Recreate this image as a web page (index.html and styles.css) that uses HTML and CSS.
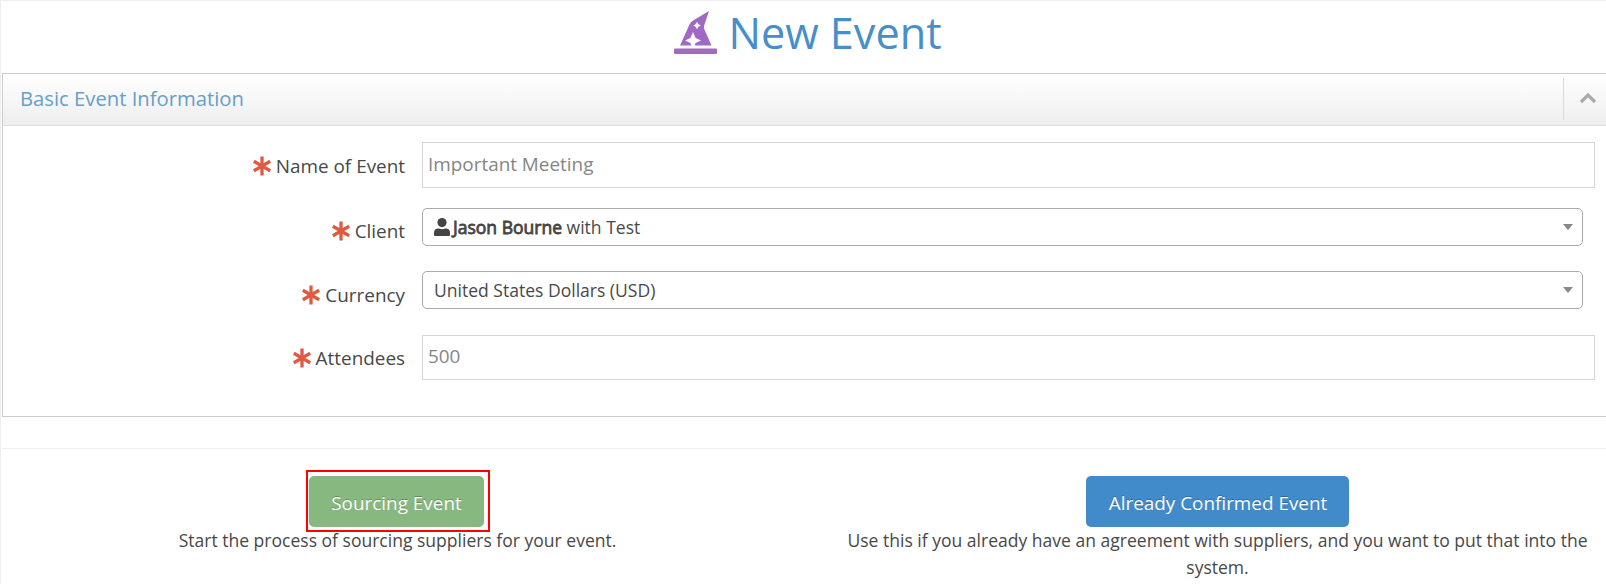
FILE: index.html
```html
<!DOCTYPE html>
<html lang="en">
<head>
    <meta charset="UTF-8">
    <meta name="viewport" content="width=device-width, initial-scale=1.0">
    <title>New Event</title>
    <link rel="stylesheet" href="styles.css">
</head>
<body>
    <!-- shared icons -->
    <svg class="sprite">
        <symbol id="asterisk" viewBox="0 0 18 20">
            <path d="M9 .5v19M.8 5.3l16.4 9.4M.8 14.7l16.4-9.4" fill="none" stroke="currentColor" stroke-width="3.3"/>
        </symbol>
    </svg>

    <div class="page">
        <h1 class="page-title">
            <svg class="hat" viewBox="0 0 43 43">
                <path d="M6 34.5L15.5 13.5Q16.8 10.8 19.5 9.2L35 0L30.2 14.6Q29.6 16.3 30.2 18L37.5 34.5Z"/>
                <path class="star" d="M23 10.8L24.4 13.3L26.9 14.5L24.4 15.7L23 18.2L21.6 15.7L19.1 14.5L21.6 13.3Z"/>
                <path class="star" d="M19 21L21.6 27L27 29.5L21.6 32L20.6 35H17.4L16.4 32L11 29.5L16.4 27Z"/>
                <rect x="0" y="37.5" width="43" height="5.5" rx="1"/>
            </svg>
            <span>New Event</span>
        </h1>

        <div class="panel">
            <div class="panel-header">
                <h2>Basic Event Information</h2>
                <a class="collapse">
                    <svg width="18" height="12" viewBox="0 0 18 12"><path d="M2 10l7-7 7 7" fill="none" stroke="#aaa" stroke-width="3.2"/></svg>
                </a>
            </div>
            <form class="panel-body">
                <div class="form-row">
                    <label for="name"><svg class="required"><use href="#asterisk"/></svg>Name of Event</label>
                    <input type="text" id="name" class="field" value="Important Meeting">
                </div>
                <div class="form-row">
                    <label><svg class="required"><use href="#asterisk"/></svg>Client</label>
                    <div class="select">
                        <svg class="user" viewBox="0 0 16 18"><circle cx="8" cy="4.6" r="4.6"/><path d="M0 18v-3.2Q0 10.5 4.5 10.5H5Q8 12 11 10.5h.5Q16 10.5 16 14.8V17q0 1-1 1H1q-1 0-1-1z"/></svg>
                        <span><b>Jason Bourne</b> with Test</span>
                        <i class="arrow"></i>
                    </div>
                </div>
                <div class="form-row">
                    <label><svg class="required"><use href="#asterisk"/></svg>Currency</label>
                    <div class="select">
                        <span>United States Dollars (USD)</span>
                        <i class="arrow"></i>
                    </div>
                </div>
                <div class="form-row">
                    <label for="attendees"><svg class="required"><use href="#asterisk"/></svg>Attendees</label>
                    <input type="text" id="attendees" class="field short" value="500">
                </div>
            </form>
        </div>

        <hr>

        <div class="actions">
            <div class="action">
                <div class="highlight"><button class="btn btn-success">Sourcing Event</button></div>
                <p>Start the process of sourcing suppliers for your event.</p>
            </div>
            <div class="action">
                <button class="btn btn-primary">Already Confirmed Event</button>
                <p>Use this if you already have an agreement with suppliers, and you want to put that into the system.</p>
            </div>
        </div>
    </div>
</body>
</html>
```

FILE: styles.css
```css
* {
    box-sizing: border-box;
}
body {
    margin: 0;
    font-family: "Open Sans", sans-serif;
    font-size: 17.55px;
    line-height: 27px;
    color: #484848;
    background-color: #fff;
    overflow: hidden;
}
.sprite {
    display: none;
}
.page {
    height: 584px;
    border-top: 1px solid #eee;
    border-left: 1px solid #eee;
    padding-left: 1px;
}
.page-title {
    display: flex;
    justify-content: center;
    height: 72px;
    margin: 0;
    padding-left: 7px;
    font-size: 43.2px;
    font-weight: 400;
    line-height: 63px;
    color: #478fca;
}
.hat {
    width: 43px;
    height: 43px;
    margin: 10px 11px 0 1px;
    fill: #a069c3;
}
.star {
    fill: #fff;
}
.panel {
    height: 344px;
    border: 1px solid #ccc;
    border-right: none;
}
.panel-header {
    display: flex;
    justify-content: space-between;
    align-items: center;
    height: 52px;
    padding-left: 17px;
    border-bottom: 1px solid #ddd;
    background: linear-gradient(to bottom, #fff 0%, #eee 100%);
}
.panel-header h2 {
    margin: 0;
    padding-bottom: 2px;
    font-size: 20.25px;
    font-weight: 400;
    color: #669fc7;
}
.collapse {
    display: flex;
    align-items: center;
    height: 42px;
    margin-bottom: 1px;
    padding: 0 9px 2px 15px;
    border-left: 1px solid #d9d9d9;
}
.panel-body {
    padding-top: 16px;
}
.form-row {
    display: flex;
    align-items: flex-start;
    height: 63px;
}
.form-row:first-child {
    height: 66px;
}
.form-row:nth-child(3) {
    height: 64px;
}
.form-row label {
    display: flex;
    justify-content: flex-end;
    align-items: center;
    width: 419px;
    height: 48px;
    padding-right: 17px;
    font-size: 18.9px;
}
.form-row:nth-child(even) label {
    height: 46px;
}
.required {
    width: 18px;
    height: 20px;
    margin-right: 5px;
    color: #dd5a43;
}
.field {
    width: 1173px;
    height: 46px;
    padding: 0 5px 3px;
    border: 1px solid #d5d5d5;
    font-family: inherit;
    font-size: 18.9px;
    color: #858585;
}
.field.short {
    height: 45px;
    padding-bottom: 4px;
}
.select {
    display: flex;
    align-items: center;
    width: 1161px;
    height: 38px;
    padding: 0 9px 0 11px;
    border: 1px solid #aaa;
    border-radius: 5px;
}
.user {
    width: 16px;
    height: 18px;
    margin: 0 3px 0 0;
    fill: #444;
}
.select b {
    font-weight: 400;
    -webkit-text-stroke: 0.8px #444;
}
.arrow {
    margin-left: auto;
    border: 5px solid transparent;
    border-top: 6px solid #888;
    border-bottom: none;
}
hr {
    height: 1px;
    margin: 31px 0 21px;
    border: none;
    background-color: #eee;
}
.actions {
    display: flex;
    justify-content: space-between;
}
.action {
    width: 791px;
    text-align: center;
}
.action:last-child {
    width: 777px;
}
.action p {
    margin: 0;
}
.highlight {
    width: 184px;
    height: 62px;
    margin: 0 auto -5px;
    padding: 4px 4px 5px 1px;
    border: 2px solid #f00;
    text-align: left;
}
.btn {
    display: block;
    height: 51px;
    padding: 3px 0 0 1px;
    border: none;
    border-radius: 5px;
    font-family: inherit;
    font-size: 18.9px;
    color: #fff;
    text-shadow: 0 -1px 0 rgba(0, 0, 0, 0.25);
}
.btn-success {
    width: 175px;
    background-color: #87b87f;
}
.btn-primary {
    width: 263px;
    margin: 6px auto 0;
    background-color: #428bca;
}
```
